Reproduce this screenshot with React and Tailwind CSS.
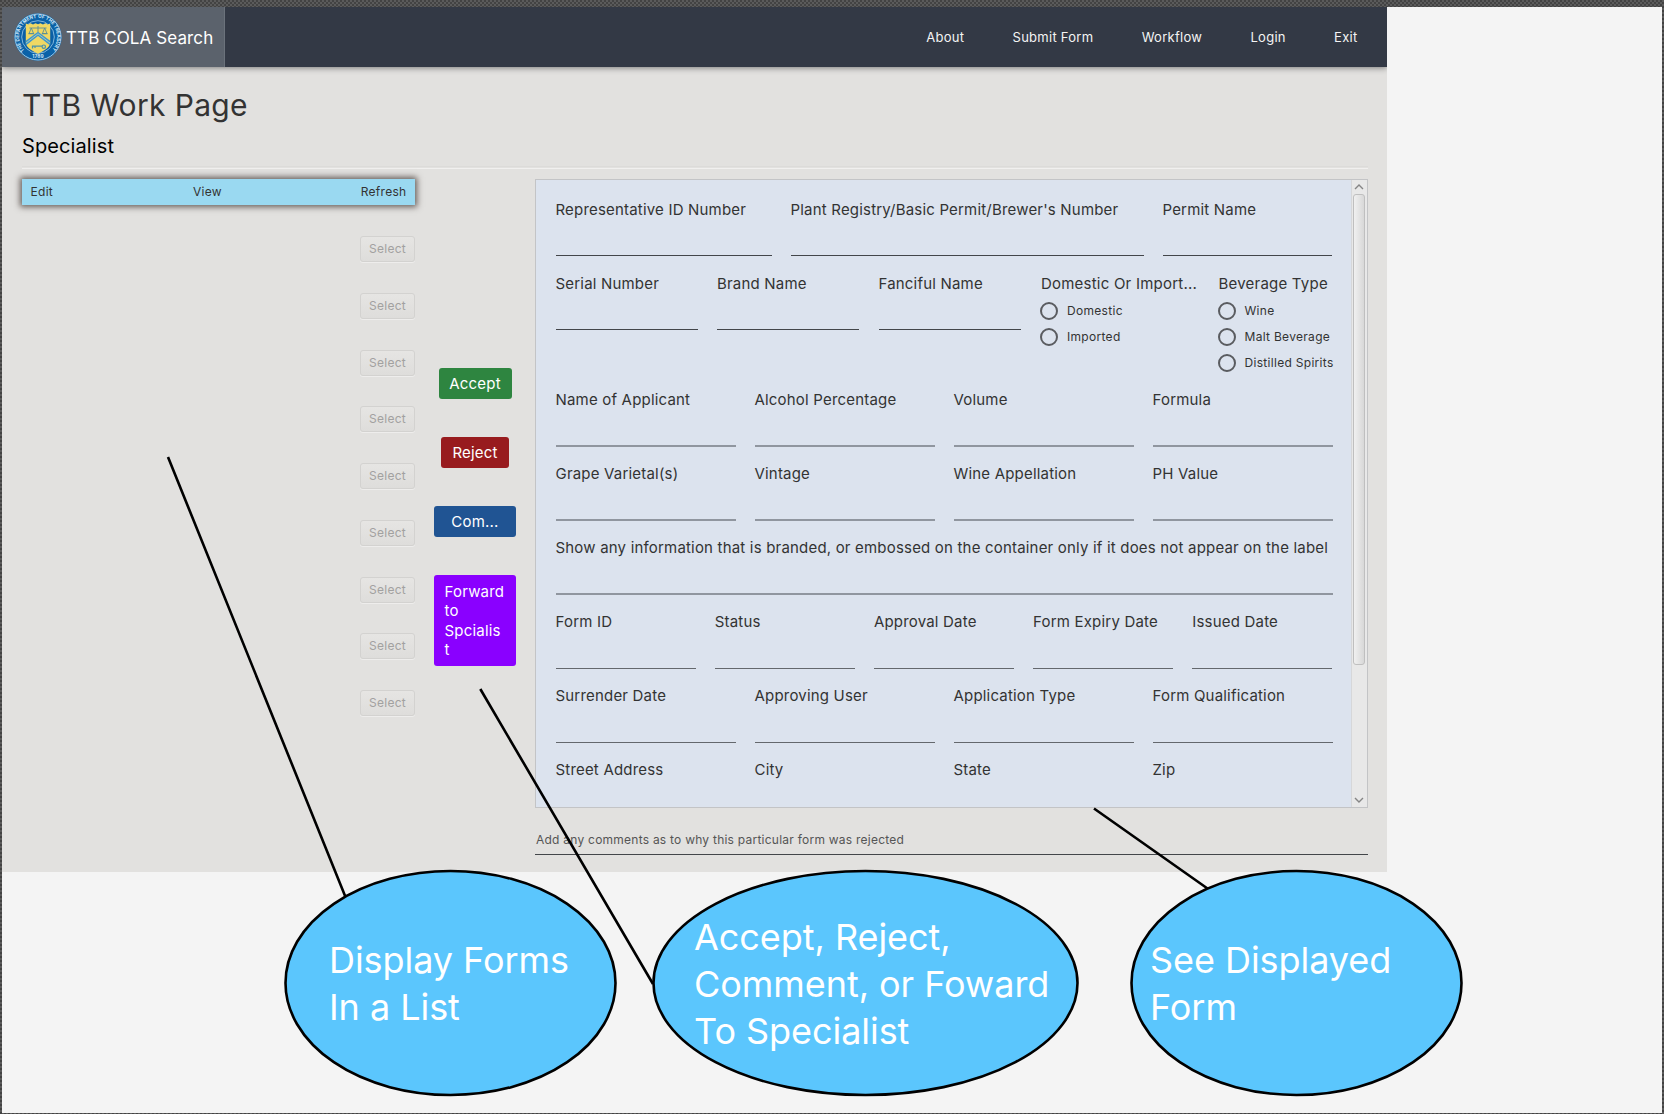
import React from 'react';

const rowsTop = [
  { cols: 'grid-cols-[216px_353px_169px]', labels: ['Representative ID Number', "Plant Registry/Basic Permit/Brewer's Number", 'Permit Name'] },
];

const rows = [
  { cols: 'grid-cols-4', soft: true, labels: ['Name of Applicant', 'Alcohol Percentage', 'Volume', 'Formula'] },
  { cols: 'grid-cols-4', soft: true, labels: ['Grape Varietal(s)', 'Vintage', 'Wine Appellation', 'PH Value'] },
  { cols: 'grid-cols-1', soft: true, labels: ['Show any information that is branded, or embossed on the container only if it does not appear on the label'] },
  { cols: 'grid-cols-5', labels: ['Form ID', 'Status', 'Approval Date', 'Form Expiry Date', 'Issued Date'], late: true },
  { cols: 'grid-cols-4', labels: ['Surrender Date', 'Approving User', 'Application Type', 'Form Qualification'], late: true },
  { cols: 'grid-cols-4', labels: ['Street Address', 'City', 'State', 'Zip'], late: true },
];

function Field({ label, soft, late }) {
  const line = soft ? 'mt-[35px] h-[2px] bg-[#90969f]' : late ? 'mt-[36px] h-px bg-[#64686d]' : 'mt-[35px] h-px bg-[#43464a]';
  return (
    <div className="min-w-0">
      <div className="whitespace-nowrap text-[15px] leading-5 tracking-[0.19px]">{label}</div>
      <div className={line} />
    </div>
  );
}

function FieldRow({ cols, labels, soft, late }) {
  return (
    <div className={`grid h-[74px] shrink-0 gap-x-[19px] ${cols}`}>
      {labels.map((l) => <Field key={l} label={l} soft={soft} late={late} />)}
    </div>
  );
}

function Radios({ title, options }) {
  return (
    <div className="min-w-0 whitespace-nowrap">
      <div className="pl-px text-[15px] leading-5 tracking-[0.22px]">{title}</div>
      <div className="mt-[4px]">
        {options.map((o) => (
          <div key={o} className="flex h-[26px] items-center gap-[9px] text-[12px] tracking-[0.3px]">
            <span className="h-[18px] w-[18px] shrink-0 rounded-full border-2 border-[#5a5c60]" />
            <span>{o}</span>
          </div>
        ))}
      </div>
    </div>
  );
}

function Seal() {
  return (
    <svg viewBox="0 0 48 48" className="h-12 w-12 shrink-0">
      <defs><path id="ring" d="M10.6 37.4A19 19 0 1 1 37.4 37.4" /></defs>
      <circle cx="24" cy="24" r="23.7" fill="#0b62a8" />
      <circle cx="24" cy="24" r="23" fill="none" stroke="#a9d0ea" strokeWidth="0.9" />
      <circle cx="24" cy="24" r="16.3" fill="#0a5fa6" stroke="#8fc0e2" strokeWidth="0.9" />
      <text fontFamily="Inter, sans-serif" fontSize="4.9" fontWeight="700" fill="#d5e9f6">
        <textPath href="#ring" textLength="88" lengthAdjust="spacingAndGlyphs">THE DEPARTMENT OF THE TREASURY</textPath>
      </text>
      <text x="24" y="45" textAnchor="middle" fontFamily="Inter, sans-serif" fontSize="4.8" fontWeight="700" fill="#d5e9f6">1789</text>
      <path d="M11.8 10.6l2.6.9 2.2-1.2 2.4 1.2 2.5-1.2 2.5 1 2.5-1 2.5 1.2 2.4-1.2 2.2 1.2 2.6-.9v18.3c0 6.2-6.6 8.6-12.2 11.8-5.6-3.2-12.2-5.6-12.2-11.8z" fill="#f0d863" />
      <g fill="none" stroke="#5b8f96" strokeWidth="0.9">
        <path d="M15.5 15h17M24 13v6M17.3 15l-2.3 5.6M17.3 15l2.3 5.6M30.7 15l-2.3 5.6M30.7 15l2.3 5.6" />
        <path d="M14.5 20.6h5.6M27.9 20.6h5.6" strokeWidth="1.4" />
      </g>
      <path d="M11.8 32.5l12.2-9.6 12.2 9.6v-4.8l-12.2-9-12.2 9z" fill="#3f95cf" />
      <path d="M11.8 30.2l12.2-9.4 12.2 9.4" fill="none" stroke="#c8dba0" strokeWidth="0.8" />
      <g fill="none" stroke="#4d93a8" strokeWidth="1.2"><circle cx="29.8" cy="33.7" r="1.7" /><path d="M28 33.2h-9.5v2.2M21 33.2v1.8" /></g>
    </svg>
  );
}

function Chevron({ d }) {
  return (
    <svg viewBox="0 0 12 8" className="h-2 w-3 shrink-0" fill="none" stroke="#858585" strokeWidth="1.4"><path d={d} /></svg>
  );
}

const selects = [1, 2, 3, 4, 5, 6, 7, 8, 9];

export default function App() {
  return (
    <div className="relative h-[1114px] w-[1664px] overflow-hidden bg-[#464646] bg-[conic-gradient(#5b5b5b_25%,#434343_0_50%,#5b5b5b_0_75%,#434343_0)] bg-[length:4px_4px] pl-[2px] pr-[2px] pt-[7px] font-['Inter',sans-serif] text-[#333333]">
      <div className="h-[1106px] w-[1660px] bg-[#f4f4f4]">
        <div className="flex h-[865px] w-[1385px] flex-col bg-[#e2e1df]">
          <header className="flex h-[60px] shrink-0 items-stretch justify-between bg-[#333945] shadow-[0_1px_6px_rgba(0,0,0,0.45)] [clip-path:inset(0_0_-12px_0)]">
            <div className="flex w-[223px] items-center gap-[4px] border-r border-[#6b727b] bg-[#5b626c] pl-3 text-[17px] tracking-[0.1px] text-white">
              <Seal />
              <span className="whitespace-nowrap pt-[3px]">TTB COLA Search</span>
            </div>
            <nav className="flex items-center gap-[48.3px] pr-[29.5px] pt-[2px] text-[13px] tracking-[0.27px] text-[#f4f4f4]">
              <span>About</span>
              <span>Submit Form</span>
              <span>Workflow</span>
              <span>Login</span>
              <span>Exit</span>
            </nav>
          </header>

          <main className="flex flex-col pl-[20px] pr-[19px]">
            <h1 className="mt-[18px] text-[30px] leading-[40px] tracking-[0.35px]">TTB Work Page</h1>
            <h2 className="mt-[8px] text-[20px] leading-[26px] tracking-[0.1px] text-black">Specialist</h2>
            <div className="mt-[7px] h-[3px] border-b border-t border-b-[#f1f0ef] border-t-[#dcdbd9]" />

            <div className="mt-[10px] flex h-[629px]">
              <section className="w-[393px] shrink-0">
                <div className="flex h-[26px] items-center justify-between bg-[#9ad9f1] px-[8.5px] text-[12px] tracking-[0.3px] shadow-[0_0_6px_2px_rgba(60,50,45,0.75)]">
                  <span>Edit</span>
                  <span className="pl-[1px]">View</span>
                  <span>Refresh</span>
                </div>
                <div className="mt-[31px] flex flex-col items-end gap-[30.75px]">
                  {selects.map((n) => (
                    <button key={n} className="h-[26px] w-[55px] rounded-[3px] border border-[#d3d2d0] bg-linear-to-b from-[#e6e5e3] to-[#dedddb] text-[12px] leading-none tracking-[0.25px] text-[#a2a1a0] shadow-[0_1px_0_#eeedec]">Select</button>
                  ))}
                </div>
              </section>

              <section className="ml-[19px] mr-[19px] flex w-[82px] shrink-0 flex-col items-center gap-[38.5px] pt-[189px] text-[15px] tracking-[0.2px] text-white">
                <button className="h-[30.5px] w-[73px] rounded-[3px] bg-[#2e8540] pt-[2px]">Accept</button>
                <button className="h-[30.5px] w-[68px] rounded-[3px] bg-[#981b1e] pt-[2px]">Reject</button>
                <button className="h-[30.5px] w-[82px] rounded-[3px] bg-[#205493] pt-[2px]">Com...</button>
                <button className="h-[91px] w-[82px] break-all rounded-[3px] bg-[#8a00ff] pl-[10.5px] text-left leading-[19.25px]">Forward<br />to<br />Spcialis<br />t</button>
              </section>

              <section className="flex min-w-0 flex-1 overflow-hidden border border-[#c3c4c6] bg-[#dce3ee]">
                <div className="flex w-[815px] shrink-0 flex-col overflow-hidden pl-[19.5px] pr-[18.5px] pt-[20px]">
                  {rowsTop.map((r) => <FieldRow key={r.labels[0]} {...r} />)}
                  <div className="grid h-[116px] shrink-0 grid-cols-[142px_142px_142px_158px_120px] gap-x-[19.5px]">
                    <Field label="Serial Number" />
                    <Field label="Brand Name" />
                    <Field label="Fanciful Name" />
                    <Radios title="Domestic Or Import..." options={['Domestic', 'Imported']} />
                    <Radios title="Beverage Type" options={['Wine', 'Malt Beverage', 'Distilled Spirits']} />
                  </div>
                  {rows.map((r) => <FieldRow key={r.labels[0]} {...r} />)}
                </div>
                <div className="flex flex-1 flex-col items-center border-l border-[#d6d7d9] bg-[#e8e8e8] pb-[3px] pr-[2px] pt-[3px]">
                  <Chevron d="M2 6l4-4 4 4" />
                  <div className="mt-[3px] h-[471px] w-[12px] rounded-[3px] border border-[#bfbfbf] bg-linear-to-r from-[#f0f0f0] to-[#d8d8d8]" />
                  <div className="flex-1" />
                  <Chevron d="M2 2l4 4 4-4" />
                </div>
              </section>
            </div>

            <div className="ml-[513px] mt-[21px] h-[26px] border-b border-[#43464a] pl-[1px] text-[12px] leading-[22px] tracking-[0.24px] text-[#555555]">
              Add any comments as to why this particular form was rejected
            </div>
          </main>
        </div>
      </div>

      {/* Callouts floating over the page */}
      <svg className="absolute left-0 top-0 h-[1114px] w-[1664px]" viewBox="0 0 1664 1114" fill="none" stroke="#000" strokeWidth="2.6">
        <path d="M168 457L345.5 897M480.3 689L653 984M1094 808.5L1207.5 888.5" />
        <ellipse cx="450.5" cy="983" rx="165" ry="112" fill="#5bc6fd" />
        <ellipse cx="865.5" cy="983" rx="212" ry="112" fill="#5bc6fd" />
        <ellipse cx="1296.5" cy="983" rx="165" ry="112" fill="#5bc6fd" />
      </svg>
      <p className="absolute left-[329px] top-[936.5px] whitespace-pre text-[36px] leading-[47px] tracking-[-0.05px] text-white">{'Display Forms\nIn a List'}</p>
      <p className="absolute left-[694px] top-[913.5px] whitespace-pre text-[36px] leading-[47px] tracking-[-0.05px] text-white">{'Accept, Reject,\nComment, or Foward\nTo Specialist'}</p>
      <p className="absolute left-[1150px] top-[936.5px] whitespace-pre text-[36px] leading-[47px] tracking-[-0.05px] text-white">{'See Displayed\nForm'}</p>
    </div>
  );
}
